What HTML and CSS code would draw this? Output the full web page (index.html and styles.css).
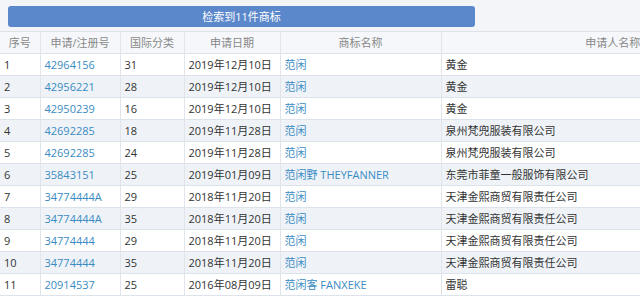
FILE: index.html
```html
<!DOCTYPE html>
<html lang="zh-CN">
<head>
<meta charset="utf-8">
<title>检索结果</title>
<link rel="stylesheet" href="styles.css">
</head>
<body>
<div class="page">
  <div class="top">
    <div class="banner">检索到11件商标</div>
  </div>
  <div class="table-wrap">
    <table class="results">
      <colgroup>
        <col class="c-no"><col class="c-reg"><col class="c-cls"><col class="c-date"><col class="c-name"><col class="c-app">
      </colgroup>
      <thead>
        <tr><th>序号</th><th>申请/注册号</th><th>国际分类</th><th>申请日期</th><th>商标名称</th><th>申请人名称</th></tr>
      </thead>
      <tbody>
        <tr><td>1</td><td class="link">42964156</td><td>31</td><td>2019年12月10日</td><td class="link">范闲</td><td>黄金</td></tr>
        <tr class="alt"><td>2</td><td class="link">42956221</td><td>28</td><td>2019年12月10日</td><td class="link">范闲</td><td>黄金</td></tr>
        <tr><td>3</td><td class="link">42950239</td><td>16</td><td>2019年12月10日</td><td class="link">范闲</td><td>黄金</td></tr>
        <tr class="alt"><td>4</td><td class="link">42692285</td><td>18</td><td>2019年11月28日</td><td class="link">范闲</td><td>泉州梵兜服装有限公司</td></tr>
        <tr><td>5</td><td class="link">42692285</td><td>24</td><td>2019年11月28日</td><td class="link">范闲</td><td>泉州梵兜服装有限公司</td></tr>
        <tr class="alt"><td>6</td><td class="link">35843151</td><td>25</td><td>2019年01月09日</td><td class="link">范闲野 THEYFANNER</td><td>东莞市菲童一般服饰有限公司</td></tr>
        <tr><td>7</td><td class="link">34774444A</td><td>29</td><td>2018年11月20日</td><td class="link">范闲</td><td>天津金熙商贸有限责任公司</td></tr>
        <tr class="alt"><td>8</td><td class="link">34774444A</td><td>35</td><td>2018年11月20日</td><td class="link">范闲</td><td>天津金熙商贸有限责任公司</td></tr>
        <tr><td>9</td><td class="link">34774444</td><td>29</td><td>2018年11月20日</td><td class="link">范闲</td><td>天津金熙商贸有限责任公司</td></tr>
        <tr class="alt"><td>10</td><td class="link">34774444</td><td>35</td><td>2018年11月20日</td><td class="link">范闲</td><td>天津金熙商贸有限责任公司</td></tr>
        <tr><td>11</td><td class="link">20914537</td><td>25</td><td>2016年08月09日</td><td class="link">范闲客 FANXEKE</td><td>雷聪</td></tr>
      </tbody>
    </table>
  </div>
</div>
</body>
</html>
```
FILE: styles.css
```css
html, body {
  margin: 0;
  padding: 0;
  background: #f3f5f8;
  overflow: hidden;
}
.page {
  width: 640px;
  height: 296px;
  overflow: hidden;
  font-family: "Open Sans", "Noto Sans CJK SC", sans-serif;
  font-size: 11px;
  color: #333;
}
.top {
  padding: 6px 0 0 8px;
  height: 31px;
  box-sizing: border-box;
}
.banner {
  width: 467px;
  height: 21px;
  line-height: 21px;
  background: #5b87cb;
  border-radius: 3px;
  color: #fff;
  text-align: center;
  font-size: 11px;
}
.table-wrap {
  width: 640px;
  overflow: hidden;
}
.results {
  border-collapse: collapse;
  table-layout: fixed;
  width: 784px;
  border-top: 1px solid #dde2e8;
}
.c-no { width: 40px; }
.c-reg { width: 80px; }
.c-cls { width: 64px; }
.c-date { width: 96px; }
.c-name { width: 161px; }
.c-app { width: 343px; }
.results th,
.results td {
  height: 21px;
  padding: 0 4px;
  line-height: 21px;
  white-space: nowrap;
  overflow: hidden;
  border-bottom: 1px solid #dde3ea;
  border-left: 1px solid #e1e5ea;
  text-align: left;
  font-weight: normal;
}
.results th:first-child,
.results td:first-child {
  border-left: none;
}
.results th {
  background: #f5f7fa;
  color: #888;
  text-align: center;
}
.results tbody tr {
  background: #fff;
}
.results tbody tr.alt {
  background: #eff3f8;
}
.results td.link {
  color: #3a8bc2;
}
```
